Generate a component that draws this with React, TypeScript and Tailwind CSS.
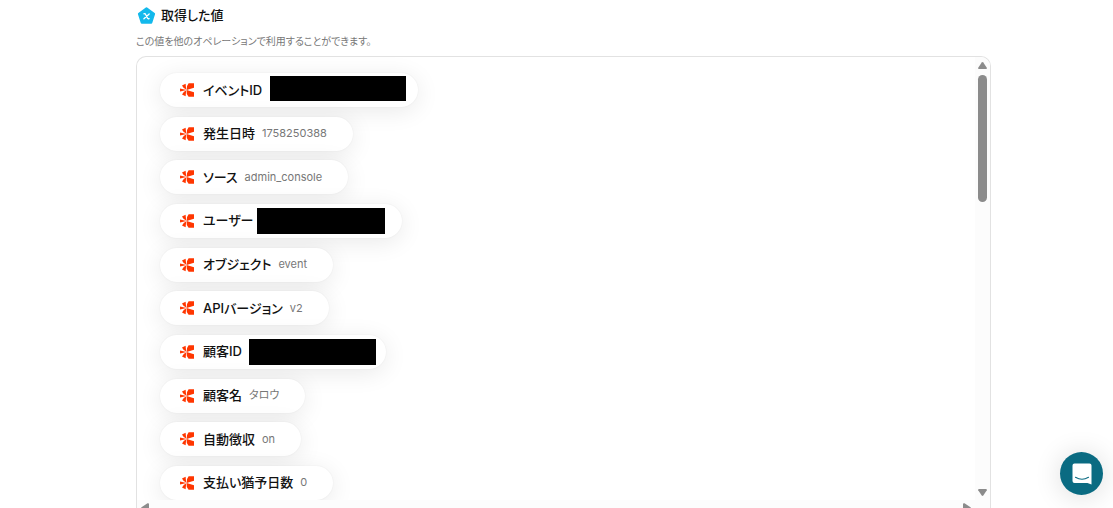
import React from "react";

type Entry = {
  label: string;
  value?: string;
  /** Width of the hidden value and spacing around it. */
  mask?: string;
};

const entries: Entry[] = [
  { label: "イベントID", mask: "ml-2 mr-3 mb-[3px] h-[25px] w-[136px]" },
  { label: "発生日時", value: "1758250388" },
  { label: "ソース", value: "admin_console" },
  { label: "ユーザー", mask: "ml-[3px] mr-[17px] h-[26px] w-32" },
  { label: "オブジェクト", value: "event" },
  { label: "APIバージョン", value: "v2" },
  { label: "顧客ID", mask: "ml-[7px] mr-[10px] h-[26px] w-[127px]" },
  { label: "顧客名", value: "タロウ" },
  { label: "自動徴収", value: "on" },
  { label: "支払い猶予日数", value: "0" },
];

function ServiceIcon() {
  return (
    <svg viewBox="0 0 14 14" className="h-[14px] w-[14px] shrink-0" fill="#ff3600" aria-hidden="true">
      <path d="M8.600 0.200H14V4.700L6.600 7Q6 3.200 8.600 0.200z" />
      <path d="M8.600 13.800H14V9.300L6.600 7Q6 10.800 8.600 13.800z" />
      <path d="M2 2.400 5.600 0.800 6.200 6.600Q3.800 6 2 2.400z" />
      <path d="M2 11.600 5.600 13.200 6.200 7.400Q3.800 8 2 11.600z" />
      <path d="M0 5.400 6.600 7 0 8.600z" />
    </svg>
  );
}

function Pill({ entry }: { entry: Entry }) {
  return (
    <li className="flex h-[34px] w-fit items-center rounded-full bg-white pl-5 shadow-[0_4px_24px_rgba(0,0,0,0.09),0_0_2px_rgba(0,0,0,0.06)]">
      <ServiceIcon />
      <span className="ml-[9px] pb-px whitespace-nowrap text-[13px] leading-5 font-medium text-[#111]">{entry.label}</span>
      {entry.mask ? (
        <span className={`${entry.mask} shrink-0 bg-black`} />
      ) : (
        <span className="ml-[7px] mr-[26px] pb-px whitespace-nowrap text-[11px] leading-5 text-[#777]">{entry.value}</span>
      )}
    </li>
  );
}

export default function App() {
  return (
    <div className="flex h-screen flex-col overflow-hidden bg-white pr-[122px] pl-[136px] font-[Inter,'Noto_Sans_CJK_JP',sans-serif] [font-feature-settings:'palt']">
      <header className="shrink-0">
        <h2 className="flex h-8 items-center gap-1 text-[13px] font-medium text-[#111]">
          <svg viewBox="0 0 20 20" className="h-5 w-[21px]" aria-hidden="true">
            <path
              d="M10 2.500 17.500 8 14.700 16.700H5.300L2.500 8z"
              fill="#13b9ec"
              stroke="#13b9ec"
              strokeWidth="2.200"
              strokeLinejoin="round"
            />
            <path d="M7.400 7.800Q8.700 7.300 9.300 8.700L10.800 11.800Q11.400 13.100 12.600 12.600M12.700 7.900 7.400 12.700" fill="none" stroke="#fff" strokeWidth="1.300" strokeLinecap="round" />
          </svg>
          取得した値
        </h2>
        <p className="h-6 text-[10px] leading-[19px] text-[#777]">この値を他のオペレーションで利用することができます。</p>
      </header>

      <section className="flex min-h-0 flex-1 flex-col overflow-hidden rounded-t-[10px] border border-b-0 border-[#e2e2e2]">
        <div className="flex min-h-0 flex-1">
          <div className="min-w-0 flex-1 overflow-hidden px-[23px] pt-4">
            <ul className="flex h-[427px] flex-col justify-between">
              {entries.map((entry) => (
                <Pill key={entry.label} entry={entry} />
              ))}
            </ul>
          </div>
          <div className="flex w-[15px] shrink-0 flex-col items-center bg-[#fcfcfc] pt-[5px] pb-1">
            <svg viewBox="0 0 9 7" className="h-[7px] w-[9px]" fill="#8b8b8b" aria-hidden="true">
              <path d="M3.700.5Q4.500-.4 5.300.5L8.800 5.800Q9 7 8 7H1Q0 7 .2 5.800z" />
            </svg>
            <div className="mt-[6px] h-[127px] w-[9px] rounded-full bg-[#8b8b8b]" />
            <svg viewBox="0 0 9 7" className="mt-auto h-[7px] w-[9px]" fill="#8b8b8b" aria-hidden="true">
              <path d="M3.700 6.500Q4.500 7.400 5.300 6.500L8.800 1.200Q9 0 8 0H1Q0 0 .2 1.200z" />
            </svg>
          </div>
        </div>
        <div className="flex h-2 shrink-0 justify-between overflow-hidden bg-[#fcfcfc] pt-[3px] pr-[19px] pl-1">
          <svg viewBox="0 0 8 10" className="h-[10px] w-2 shrink-0" fill="#8b8b8b" aria-hidden="true">
            <path d="M.5 4.200Q-.4 5 .5 5.800L6.500 9.700Q8 10 8 9V1Q8 0 6.500.3z" />
          </svg>
          <svg viewBox="0 0 8 10" className="h-[10px] w-2 shrink-0" fill="#8b8b8b" aria-hidden="true">
            <path d="M7.500 4.200Q8.400 5 7.500 5.800L1.500 9.700Q0 10 0 9V1Q0 0 1.500.3z" />
          </svg>
        </div>
      </section>

      <button
        type="button"
        aria-label="チャットを開く"
        className="fixed right-[10px] bottom-[13px] flex h-[43px] w-[43px] items-center justify-center rounded-full bg-[#0a6b82] shadow-[0_2px_28px_rgba(0,0,0,0.14)]"
      >
        <svg viewBox="0 0 20 22" className="h-[22px] w-5" aria-hidden="true">
          <path d="M2.500.5h15Q19.500.5 19.500 2.500V21.500L15.500 20H2.500Q.5 20 .5 18V2.500Q.5.500 2.500.5z" fill="#fff" />
          <path d="M3.500 14.300q6.500 4 13 0" fill="none" stroke="#0a6b82" strokeWidth="1.100" strokeLinecap="round" />
        </svg>
      </button>
    </div>
  );
}
